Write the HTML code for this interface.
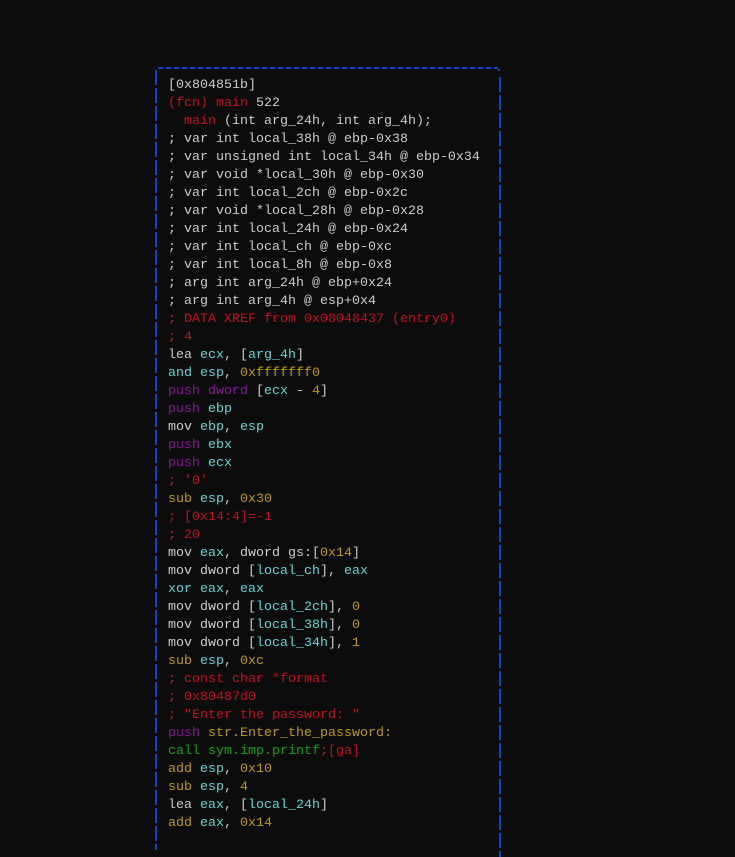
<!DOCTYPE html>
<html><head><meta charset="utf-8"><style>
html,body{margin:0;padding:0;background:#0c0c0c;width:735px;height:839px;overflow:hidden}
.v{position:absolute;width:2px;height:780px;background:repeating-linear-gradient(to bottom,#0f45c8 0 15px,transparent 15px 18px)}
#top{position:absolute;left:158px;top:67px;width:340px;height:2px;
background:repeating-linear-gradient(to right,#0f45c8 0 5px,transparent 5px 8px)}
pre{position:absolute;left:168px;top:77px;margin:0;font-family:"Liberation Mono",monospace;font-size:13.33px;line-height:18px;color:#cccccc}
.r{color:#c50f1f}.c{color:#61d6d6}.y{color:#c19c00}.m{color:#881798}.g{color:#13a10e}
</style></head><body>
<div id="top"></div>
<div class="v" style="left:155px;top:70px"></div>
<div class="v" style="left:499px;top:77px"></div>
<div style="position:absolute;left:498px;top:69px;width:2px;height:2px;background:#0f45c8"></div>
<pre>[0x804851b]
<span class="r">(fcn) main</span> 522
  <span class="r">main</span> (int arg_24h, int arg_4h);
; var int local_38h @ ebp-0x38
; var unsigned int local_34h @ ebp-0x34
; var void *local_30h @ ebp-0x30
; var int local_2ch @ ebp-0x2c
; var void *local_28h @ ebp-0x28
; var int local_24h @ ebp-0x24
; var int local_ch @ ebp-0xc
; var int local_8h @ ebp-0x8
; arg int arg_24h @ ebp+0x24
; arg int arg_4h @ esp+0x4
<span class="r">; DATA XREF from 0x08048437 (entry0)</span>
<span class="r">; 4</span>
lea <span class="c">ecx</span>, [<span class="c">arg_4h</span>]
<span class="c">and esp</span>, <span class="y">0xfffffff0</span>
<span class="m">push dword</span> [<span class="c">ecx</span> - <span class="y">4</span>]
<span class="m">push</span> <span class="c">ebp</span>
mov <span class="c">ebp</span>, <span class="c">esp</span>
<span class="m">push</span> <span class="c">ebx</span>
<span class="m">push</span> <span class="c">ecx</span>
<span class="r">; '0'</span>
<span class="y">sub</span> <span class="c">esp</span>, <span class="y">0x30</span>
<span class="r">; [0x14:4]=-1</span>
<span class="r">; 20</span>
mov <span class="c">eax</span>, dword gs:[<span class="y">0x14</span>]
mov dword [<span class="c">local_ch</span>], <span class="c">eax</span>
<span class="c">xor eax</span>, <span class="c">eax</span>
mov dword [<span class="c">local_2ch</span>], <span class="y">0</span>
mov dword [<span class="c">local_38h</span>], <span class="y">0</span>
mov dword [<span class="c">local_34h</span>], <span class="y">1</span>
<span class="y">sub</span> <span class="c">esp</span>, <span class="y">0xc</span>
<span class="r">; const char *format</span>
<span class="r">; 0x80487d0</span>
<span class="r">; "Enter the password: "</span>
<span class="m">push</span> <span class="y">str.Enter_the_password:</span>
<span class="g">call sym.imp.printf</span><span class="r">;[ga]</span>
<span class="y">add</span> <span class="c">esp</span>, <span class="y">0x10</span>
<span class="y">sub</span> <span class="c">esp</span>, <span class="y">4</span>
lea <span class="c">eax</span>, [<span class="c">local_24h</span>]
<span class="y">add</span> <span class="c">eax</span>, <span class="y">0x14</span>
</pre>
</body></html>
